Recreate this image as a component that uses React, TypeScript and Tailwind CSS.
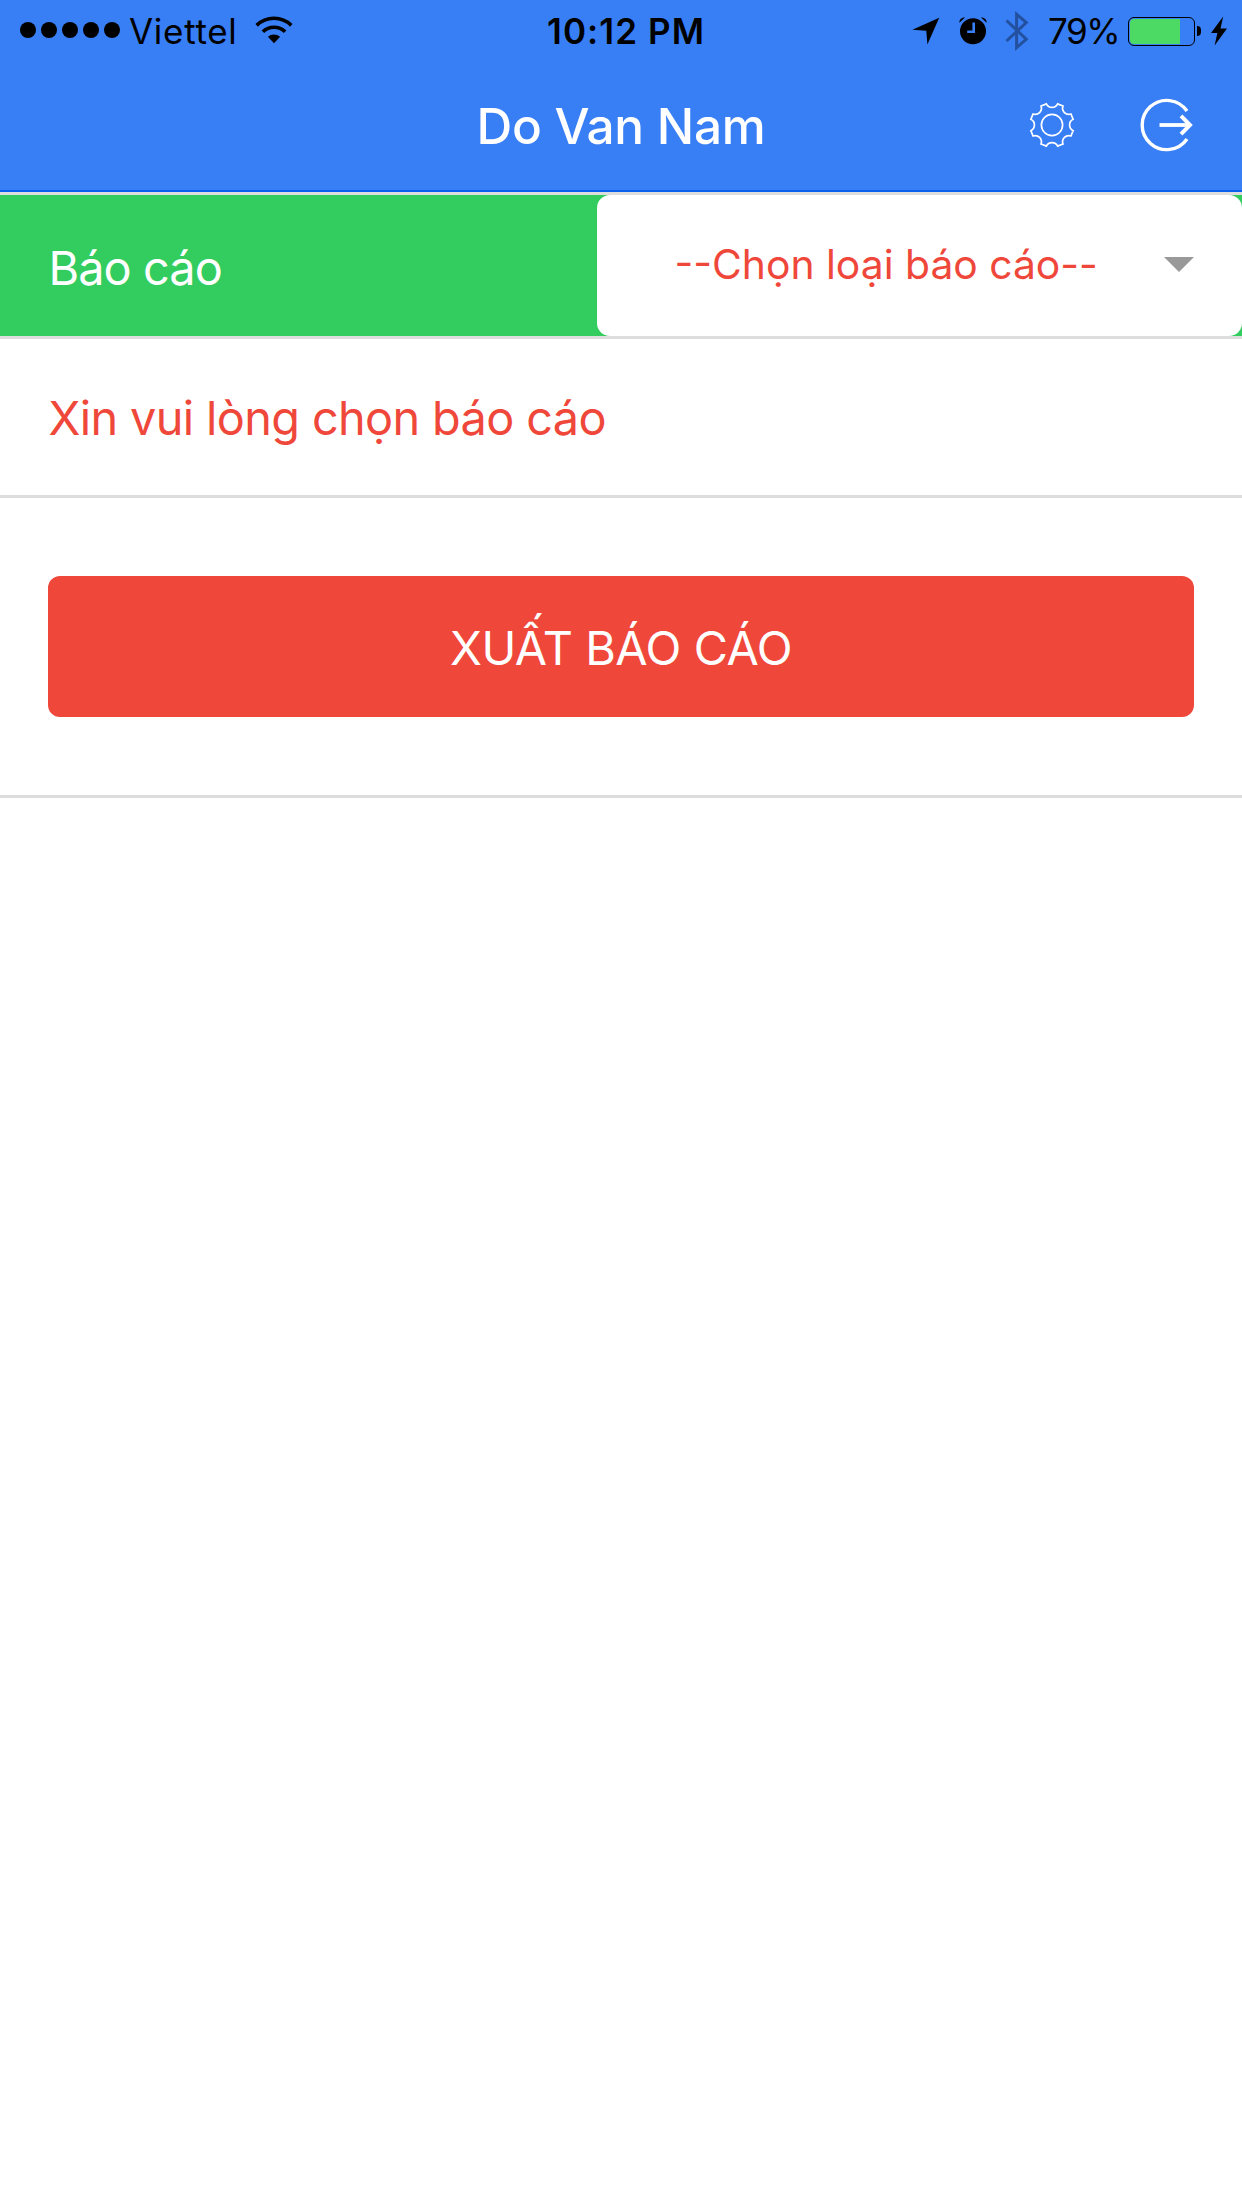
import React from "react";

const point = (deg: number, r: number) => {
  const a = (deg * Math.PI) / 180;
  return `${(24 + r * Math.cos(a)).toFixed(2)} ${(24 + r * Math.sin(a)).toFixed(2)}`;
};

const gearPath =
  Array.from({ length: 8 }, (_, i) => {
    const a = i * 45;
    return `${i === 0 ? "M" : "L"}${point(a - 15, 21.9)} A6.3 6.3 0 0 0 ${point(a + 15, 21.9)}`;
  }).join(" ") + " Z";

function SignalDots() {
  return (
    <div className="flex gap-[5px]">
      {[0, 1, 2, 3, 4].map((i) => (
        <span key={i} className="size-4 rounded-full bg-black" />
      ))}
    </div>
  );
}

function Wifi() {
  return (
    <svg className="h-7 w-[38px] shrink-0" viewBox="0 0 38 28" fill="none" stroke="#000" strokeWidth="3.7">
      <path d="M1.7 9.3A24.8 24.8 0 0 1 36.3 9.3" />
      <path d="M7.9 15.8A15.8 15.8 0 0 1 30.1 15.8" />
      <path d="M19 27.2 12.9 20.8A9 9 0 0 1 25.1 20.8Z" fill="#000" stroke="none" />
    </svg>
  );
}

function StatusBar() {
  return (
    <div className="flex h-[62px] items-center">
      <div className="flex w-[547px] items-center pl-5">
        <div className="-mt-0.5">
          <SignalDots />
        </div>
        <span className="ml-[9px] w-[106px] whitespace-nowrap text-[35px] tracking-[0.7px]">Viettel</span>
        <div className="-mt-[3px] ml-[19.5px]">
          <Wifi />
        </div>
      </div>
      <span className="w-[161px] whitespace-nowrap text-[35px] font-semibold tracking-[1.1px]">10:12 PM</span>
      <div className="ml-[204px] flex items-center">
        <svg className="h-7 w-7" viewBox="0 0 28 28">
          <path d="M.4 12.8 27.2 .8 15.4 27.4 14.3 13.8Z" />
        </svg>
        <svg className="ml-[19px] h-7 w-7" viewBox="0 0 28 28">
          <circle cx="14" cy="14.2" r="13" />
          <path d="M.4 5.8C0 2.8 2.8.2 6 .6ZM27.6 5.8C28 2.8 25.2.2 22 .6Z" />
          <path d="M14.7 5.5V14.7H8.2" fill="none" stroke="#387ef5" strokeWidth="2.6" />
        </svg>
        <svg className="ml-[18px] h-[42px] w-6" viewBox="0 0 24 42" fill="none" stroke="#23509f" strokeWidth="3">
          <path d="M1.5 10.5 21.3 29.2 11.6 37.6V4.2L21.3 12.6 1.5 31" />
        </svg>
        <span className="ml-[19px] w-[70px] whitespace-nowrap text-[35px] tracking-[-1.5px]">79%</span>
        <div className="ml-[10px] flex h-[29px] w-[67px] rounded-[6px] border border-black p-px">
          <div className="w-[50px] rounded-l-[4px] bg-[#4cd964]" />
        </div>
        <div className="ml-0.5 h-[10px] w-1 rounded-r-full bg-black" />
        <svg className="ml-[10px] h-[30px] w-4" viewBox="0 0 16 30">
          <path d="M12.2.4 0 17H6.4L3.6 29.5 16 12.5H9.5Z" />
        </svg>
      </div>
    </div>
  );
}

function Header() {
  return (
    <header className="h-[192px] border-b-2 border-[#0c60ee] bg-[#387ef5]">
      <StatusBar />
      <div className="flex h-[126px] items-center pl-[476.5px] text-white">
        <h1 className="w-[551.5px] whitespace-nowrap pt-0.5 text-[49.5px] font-medium tracking-[-0.3px]">Do Van Nam</h1>
        <svg className="-mt-px h-12 w-12" viewBox="0 0 48 48" fill="none" stroke="#fff" strokeWidth="1.7">
          <path d={gearPath} />
          <circle cx="24" cy="24" r="10.6" />
        </svg>
        <svg className="-mt-px ml-[63px] h-14 w-[58px]" viewBox="0 0 58 56" fill="none" stroke="#fff" strokeWidth="3.4">
          <path d="M48 14A24.6 24.6 0 1 0 48 42" />
          <path d="M20.5 28H50" strokeWidth="3.8" />
          <path d="M42 18.8 51 28 42 37.2" strokeWidth="4" />
        </svg>
      </div>
    </header>
  );
}

export default function App() {
  return (
    <div className="h-[2208px] w-[1242px] overflow-hidden bg-white font-['Inter',sans-serif] text-black">
      <Header />
      <div className="flex h-[147px] border-y-[3px] border-[#ddd] bg-[#33cd5f]">
        <div className="flex w-[597px] items-center pl-[48.5px] pt-[5px] text-[46.8px] tracking-[-0.9px] text-white">
          Báo cáo
        </div>
        <div className="flex w-[645px] items-center rounded-[13px] bg-white pb-0.5 pl-[77.5px]">
          <span className="w-[489.5px] whitespace-nowrap text-[40.8px] text-[#ef473a]">
            --Chọn loại báo cáo--
          </span>
          <svg className="h-[15px] w-[30px]" viewBox="0 0 30 15">
            <path d="M0 0H30L15 15Z" fill="#999" />
          </svg>
        </div>
      </div>
      <div className="flex h-[159px] items-center border-b-[3px] border-[#ddd] pl-[48.5px] pt-0.5 text-[46.8px] tracking-[-0.62px] text-[#ef473a]">
        Xin vui lòng chọn báo cáo
      </div>
      <div className="h-[300px] border-b-[3px] border-[#ddd] px-12 pt-[78px]">
        <button className="block h-[141px] w-full rounded-[12px] bg-[#ef473a] pt-[3px] text-[46.8px] tracking-[-0.45px] text-white">
          XUẤT BÁO CÁO
        </button>
      </div>
    </div>
  );
}
